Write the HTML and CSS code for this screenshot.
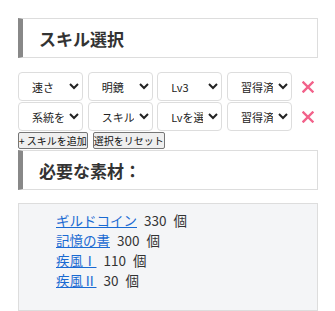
FILE: index.html
```html
<!DOCTYPE html>
<html lang="ja">
<head>
    <meta charset="UTF-8">
    <meta name="viewport" content="width=device-width, initial-scale=1.0">
    <title>スキル選択</title>
    <link rel="stylesheet" href="styles.css">
</head>
<body>
    <div class="page">
        <h2 class="section-title">スキル選択</h2>

        <div id="skillRows" class="skill-rows">
            <div class="skill-row">
                <select><option>速さ</option></select>
                <select><option>明鏡</option></select>
                <select><option>Lv3</option></select>
                <select><option>習得済み</option></select>
                <button class="remove-btn" title="削除">
                    <svg width="12" height="12" viewBox="0 0 12 12"><path d="M1.5 1.5 L10.5 10.5 M10.5 1.5 L1.5 10.5" stroke="#f2628a" stroke-width="2.4" stroke-linecap="square"/></svg>
                </button>
            </div>
            <div class="skill-row">
                <select><option>系統を選択</option></select>
                <select><option>スキルを選択</option></select>
                <select><option>Lvを選択</option></select>
                <select><option>習得済み</option></select>
                <button class="remove-btn" title="削除">
                    <svg width="12" height="12" viewBox="0 0 12 12"><path d="M1.5 1.5 L10.5 10.5 M10.5 1.5 L1.5 10.5" stroke="#f2628a" stroke-width="2.4" stroke-linecap="square"/></svg>
                </button>
            </div>
        </div>

        <div class="actions">
            <button>+ スキルを追加</button><button>選択をリセット</button>
        </div>

        <h2 class="section-title">必要な素材：</h2>

        <div class="materials">
            <ul>
                <li><a href="#">ギルドコイン</a> 330 個</li>
                <li><a href="#">記憶の書</a> 300 個</li>
                <li><a href="#">疾風Ⅰ</a> 110 個</li>
                <li><a href="#">疾風Ⅱ</a> 30 個</li>
            </ul>
        </div>
    </div>
</body>
</html>
```

FILE: styles.css
```css
body {
    margin: 0;
    font-family: "Noto Sans CJK JP", "Noto Sans", sans-serif;
    color: #222;
}
.page {
    width: 300px;
    margin: 18px 17px 0 18px;
}
.section-title {
    height: 40px;
    margin: 0;
    padding: 0 16px;
    box-sizing: border-box;
    display: flex;
    align-items: center;
    font-size: 17px;
    font-weight: bold;
    color: #333;
    border: 1px solid #ddd;
    border-left: 5px solid #888;
}
.skill-rows {
    margin-top: 14px;
}
.skill-row {
    display: flex;
    align-items: center;
    gap: 4.66px;
    margin-bottom: 1px;
}
.skill-row select {
    width: 65px;
    height: 29px;
    padding: 0 2px 0 9px;
    font-family: inherit;
    font-size: 11px;
    color: #222;
    background: #fff;
    border: 1px solid #ddd;
    border-radius: 4px;
}
.remove-btn {
    background: none;
    border: none;
    padding: 0;
    margin-left: 4px;
    width: 14px;
    height: 14px;
    display: flex;
    align-items: center;
    justify-content: center;
    cursor: pointer;
}
.actions {
    display: flex;
    gap: 5px;
    margin-top: 1px;
}
.actions button {
    font-family: inherit;
    font-size: 10px;
    height: 17px;
    padding: 0;
    line-height: 1;
    color: #111;
    background: #efefef;
    border: 1px solid #767676;
    border-radius: 2px;
}
.actions + .section-title {
    margin-top: 1px;
}
.materials {
    margin-top: 13px;
    background: #f4f5f7;
    border: 1px solid #ddd;
    padding: 6px 0 20px;
}
.materials ul {
    list-style: none;
    margin: 0;
    padding-left: 37px;
}
.materials li {
    font-size: 13.5px;
    line-height: 20px;
    word-spacing: 4px;
    color: #333;
}
.materials a {
    color: #1a6ad2;
    word-spacing: 0;
}
```
